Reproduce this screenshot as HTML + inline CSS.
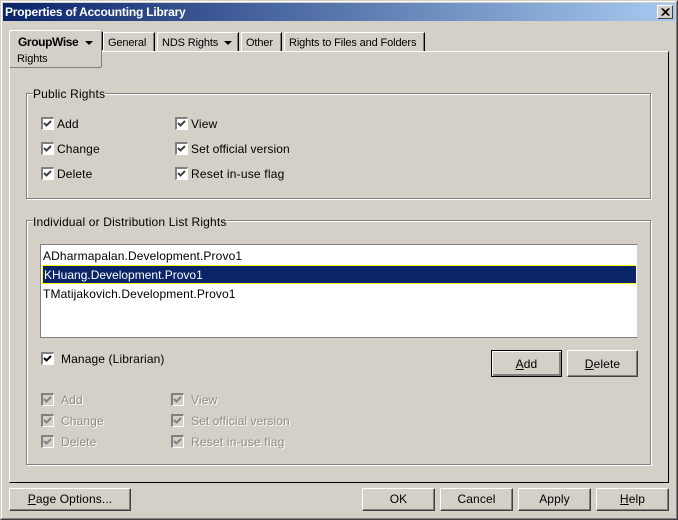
<!DOCTYPE html>
<html><head><meta charset="utf-8">
<style>
html,body{margin:0;padding:0;}
body{width:678px;height:520px;overflow:hidden;background:#d4d0c8;position:relative;font:12px "Liberation Sans",Arial,sans-serif;color:#000;letter-spacing:.12px;}
.a,.t,.b,.c,.l{position:absolute;box-sizing:border-box;}
.t{white-space:nowrap;line-height:14px;height:14px;}
.d{color:#8f8c85;text-shadow:1px 1px 0 #fff;}
u{text-decoration:underline;}
.b{background:#d4d0c8;border-top:1px solid #fff;border-left:1px solid #fff;border-right:1px solid #404040;border-bottom:1px solid #404040;box-shadow:inset -1px -1px 0 #808080;text-align:center;line-height:20px;}
.c{width:13px;height:13px;background:#fff;border-top:2px solid #808080;border-left:2px solid #808080;border-right:1px solid #fff;border-bottom:1px solid #fff;}
.c svg{position:absolute;left:0;top:0;}
.c.x{background:#d4d0c8;}
.g{position:absolute;box-sizing:border-box;border:1px solid #808080;box-shadow:1px 1px 0 #fff,inset 1px 1px 0 #fff;}
.lg{position:absolute;background:#d4d0c8;height:14px;line-height:14px;white-space:nowrap;letter-spacing:.16px;}
.tab{position:absolute;box-sizing:border-box;top:32px;height:19px;border-top:1px solid #fff;border-left:1px solid #fff;border-right:1px solid #000;box-shadow:inset -1px 0 0 #808080;line-height:21px;white-space:nowrap;padding-left:4px;font-size:11px;letter-spacing:-.13px;overflow:hidden;}
</style></head><body>
<!-- window frame -->
<div class="a" style="left:0;top:0;width:678px;height:520px;border:1px solid #d4d0c8;border-right-color:#404040;border-bottom-color:#404040;"></div>
<div class="a" style="left:1px;top:1px;width:676px;height:518px;border:1px solid #fff;border-right-color:#808080;border-bottom-color:#808080;"></div>
<!-- title bar -->
<div class="a" style="left:3px;top:3px;width:672px;height:18px;background:linear-gradient(90deg,#0a246a,#a6caf0);"></div>
<div class="t" style="left:5px;top:5px;color:#fff;font-weight:bold;font-size:12px;letter-spacing:-.2px;">Properties of Accounting Library</div>
<div class="a" style="left:657px;top:5px;width:16px;height:14px;background:#d4d0c8;border-top:1px solid #fff;border-left:1px solid #fff;border-right:1px solid #404040;border-bottom:1px solid #404040;">
<svg width="14" height="12" style="position:absolute;left:0;top:0"><path d="M3.500 2.500L10.500 9.500M4.500 2.500L11.500 9.500M10.500 2.500L3.500 9.500M11.500 2.500L4.500 9.500" stroke="#000" stroke-width="1" fill="none"/></svg>
</div>
<!-- main panel -->
<div class="a" style="left:9px;top:51px;width:660px;height:432px;border-top:1px solid #fff;border-left:1px solid #fff;border-right:1px solid #000;border-bottom:1px solid #000;"></div>
<!-- tabs -->
<div class="tab" style="left:103px;width:52px;">General</div>
<div class="tab" style="left:157px;width:82px;">NDS Rights</div>
<svg class="a" style="left:224px;top:41px" width="8" height="4"><path d="M0 0H8L4 4Z" fill="#000"/></svg>
<div class="tab" style="left:241px;width:41px;">Other</div>
<div class="tab" style="left:284px;width:141px;">Rights to Files and Folders</div>
<!-- active tab -->
<div class="a" style="left:102px;top:32px;width:1px;height:18px;background:#000;"></div>
<div class="a" style="left:9px;top:30px;width:93px;height:38px;background:#d4d0c8;border-top:1px solid #fff;border-left:1px solid #fff;border-right:1px solid #808080;border-bottom:1px solid #808080;border-radius:2px 2px 2px 0;"></div>
<div class="t" style="left:18px;top:35px;font-weight:bold;font-size:12px;letter-spacing:-.4px;">GroupWise</div>
<svg class="a" style="left:85px;top:41px" width="8" height="4"><path d="M0 0H8L4 4Z" fill="#000"/></svg>
<div class="t" style="left:17px;top:52px;font-size:11px;letter-spacing:-.1px;">Rights</div>
<!-- public rights -->
<div class="g" style="left:26px;top:93px;width:625px;height:106px;"></div>
<div class="lg" style="left:33px;top:87px;">Public Rights</div>
<div class="c" style="left:41px;top:117px"><svg width="10" height="10"><path d="M1 4l2.500 2.500L8 2" stroke="#404040" stroke-width="2" fill="none"/></svg></div><div class="t" style="left:57px;top:117px">Add</div>
<div class="c" style="left:41px;top:142px"><svg width="10" height="10"><path d="M1 4l2.500 2.500L8 2" stroke="#404040" stroke-width="2" fill="none"/></svg></div><div class="t" style="left:57px;top:142px">Change</div>
<div class="c" style="left:41px;top:167px"><svg width="10" height="10"><path d="M1 4l2.500 2.500L8 2" stroke="#404040" stroke-width="2" fill="none"/></svg></div><div class="t" style="left:57px;top:167px">Delete</div>
<div class="c" style="left:175px;top:117px"><svg width="10" height="10"><path d="M1 4l2.500 2.500L8 2" stroke="#404040" stroke-width="2" fill="none"/></svg></div><div class="t" style="left:191px;top:117px">View</div>
<div class="c" style="left:175px;top:142px"><svg width="10" height="10"><path d="M1 4l2.500 2.500L8 2" stroke="#404040" stroke-width="2" fill="none"/></svg></div><div class="t" style="left:191px;top:142px;letter-spacing:.08px">Set official version</div>
<div class="c" style="left:175px;top:167px"><svg width="10" height="10"><path d="M1 4l2.500 2.500L8 2" stroke="#404040" stroke-width="2" fill="none"/></svg></div><div class="t" style="left:191px;top:167px;letter-spacing:.2px">Reset in-use flag</div>
<!-- individual rights -->
<div class="g" style="left:26px;top:220px;width:625px;height:245px;"></div>
<div class="lg" style="left:33px;top:215px;">Individual or Distribution List Rights</div>
<div class="a" style="left:40px;top:244px;width:598px;height:94px;background:#fff;border:1px solid #808080;border-right-color:#d4d0c8;border-bottom-color:#808080;"></div>
<div class="t" style="left:43px;top:249px">ADharmapalan.Development.Provo1</div>
<div class="a" style="left:42px;top:265px;width:594px;height:19px;background:#0a246a;border:1px solid #ffff00;border-right:none;"></div>
<div class="t" style="left:44px;top:268px;color:#fff;letter-spacing:0">KHuang.Development.Provo1</div>
<div class="t" style="left:43px;top:287px">TMatijakovich.Development.Provo1</div>
<div class="c" style="left:41px;top:352px"><svg width="10" height="10"><path d="M1 4l2.500 2.500L8 2" stroke="#000" stroke-width="2" fill="none"/></svg></div><div class="t" style="left:61px;top:352px">Manage (Librarian)</div>
<div class="b" style="left:491px;top:350px;width:71px;height:27px;border:1px solid #000;box-shadow:inset 1px 1px 0 #fff,inset -2px -2px 0 #808080;line-height:27px;"><u>A</u>dd</div>
<div class="b" style="left:567px;top:350px;width:71px;height:27px;line-height:26px;"><u>D</u>elete</div>
<div class="c x" style="left:41px;top:393px"><svg width="10" height="10"><path d="M1 4l2.500 2.500L8 2" stroke="#808080" stroke-width="2" fill="none"/></svg></div><div class="t d" style="left:61px;top:393px">Add</div>
<div class="c x" style="left:41px;top:414px"><svg width="10" height="10"><path d="M1 4l2.500 2.500L8 2" stroke="#808080" stroke-width="2" fill="none"/></svg></div><div class="t d" style="left:61px;top:414px">Change</div>
<div class="c x" style="left:41px;top:435px"><svg width="10" height="10"><path d="M1 4l2.500 2.500L8 2" stroke="#808080" stroke-width="2" fill="none"/></svg></div><div class="t d" style="left:61px;top:435px">Delete</div>
<div class="c x" style="left:171px;top:393px"><svg width="10" height="10"><path d="M1 4l2.500 2.500L8 2" stroke="#808080" stroke-width="2" fill="none"/></svg></div><div class="t d" style="left:191px;top:393px">View</div>
<div class="c x" style="left:171px;top:414px"><svg width="10" height="10"><path d="M1 4l2.500 2.500L8 2" stroke="#808080" stroke-width="2" fill="none"/></svg></div><div class="t d" style="left:191px;top:414px;letter-spacing:.08px">Set official version</div>
<div class="c x" style="left:171px;top:435px"><svg width="10" height="10"><path d="M1 4l2.500 2.500L8 2" stroke="#808080" stroke-width="2" fill="none"/></svg></div><div class="t d" style="left:191px;top:435px;letter-spacing:.2px">Reset in-use flag</div>
<!-- bottom buttons -->
<div class="b" style="left:9px;top:488px;width:122px;height:23px;"><u>P</u>age Options...</div>
<div class="b" style="left:362px;top:488px;width:73px;height:23px;">OK</div>
<div class="b" style="left:440px;top:488px;width:73px;height:23px;">Cancel</div>
<div class="b" style="left:518px;top:488px;width:73px;height:23px;">Apply</div>
<div class="b" style="left:596px;top:488px;width:73px;height:23px;"><u>H</u>elp</div>
</body></html>
